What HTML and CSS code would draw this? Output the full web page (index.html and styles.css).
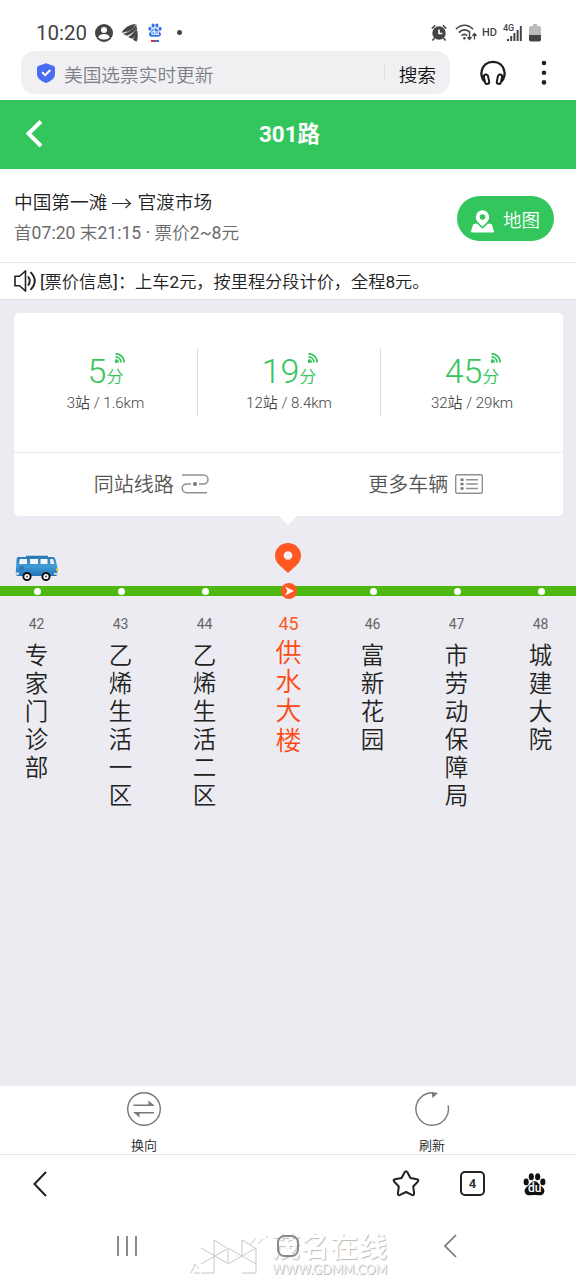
FILE: index.html
```html
<!DOCTYPE html>
<html lang="zh-CN">
<head>
<meta charset="utf-8">
<title>301路</title>
<link rel="stylesheet" href="styles.css">
</head>
<body>
<svg class="defs" width="0" height="0">
  <defs>
    <symbol id="signal" viewBox="0 0 10 10"><path d="M.5.8A8.500 8.500 0 0 1 9.200 9.500M.5 3.900A5.500 5.500 0 0 1 6.100 9.500M.5 6.800A2.600 2.600 0 0 1 3.200 9.500" fill="none" stroke="currentColor" stroke-width="1.700"/><path d="M0 7h1.500l1 3H0z" fill="currentColor"/></symbol>
    <symbol id="paw" viewBox="0 0 24 24"><ellipse cx="3.3" cy="9.8" rx="2.7" ry="3.5"/><ellipse cx="8.7" cy="4.4" rx="2.7" ry="3.7"/><ellipse cx="15.3" cy="4.4" rx="2.7" ry="3.7"/><ellipse cx="20.7" cy="9.8" rx="2.7" ry="3.5"/><path d="M12 9c3 0 3.800 2.200 6 4.300 2.600 2.300 5 4 4.200 7-.8 3.200-3.700 3.700-6.500 3.400-2.500-.3-4.900-.3-7.400 0-2.800.3-5.700-.2-6.500-3.400-.8-3 1.600-4.700 4.200-7C8.200 11.200 9 9 12 9z"/></symbol>
  </defs>
</svg>

<div class="status">
  <span class="time">10:20</span>
  <svg class="s-user" width="18" height="18" viewBox="0 0 18 18"><circle cx="9" cy="9" r="9" fill="#444"/><circle cx="9" cy="6" r="3" fill="#fff"/><path d="M3.200 13.500C4 10.800 6.500 10.100 9 10.100s5 .7 5.800 3.400C13 15 11.500 15.500 9 15.500s-4-.5-5.800-2z" fill="#fff"/></svg>
  <svg class="s-wing" width="16" height="18" viewBox="0 0 16 18"><path d="M0 8.500C3 3 8 1 13.500 0 12 4 9 6.500 5 7.500zM1.500 10C7 8 11 6 14.300.8 14.500 7 10 9.500 5 11.500zM6.500 13C10 11 13 8 14.600 3c.8 6-.5 9-4.500 11.500zM11 15.500C13.500 12 14.500 10 15 7c1 4 .7 7-.5 10.500z" fill="#444" stroke="#444" stroke-width=".4"/></svg>
  <span class="s-paw"><svg width="14" height="14" fill="#3473e8"><use href="#paw"/></svg><b>du</b><i></i></span>
  <span class="s-dot"></span>
  <span class="grow"></span>
  <svg width="16" height="17" viewBox="0 0 16 17"><circle cx="8" cy="9" r="6.700" fill="#444"/><path d="M8 5.500V9.500h3.400" stroke="#fff" stroke-width="1.600" fill="none"/><path d="M.8 4.500 4.200 1.200M15.200 4.500 11.800 1.200M3.500 14l-2 2.500M12.500 14l2 2.500" stroke="#444" stroke-width="1.600"/></svg>
  <svg class="s-wifi" width="22" height="17" viewBox="0 0 22 17"><path d="M1 5.200C6-.1 13-.1 18 5.200M3.800 8.600c3.500-3.600 8-3.600 11.400 0M6.600 11.600c1.900-1.700 3.700-1.700 5.600 0" fill="none" stroke="#444" stroke-width="1.700"/><circle cx="9.400" cy="14.300" r="1.200" fill="#444"/><path d="M14.500 9v6M12.500 13l2 2.500 2-2.500M19.500 15.500v-6M17.500 12l2-2.500 2 2.500" fill="none" stroke="#444" stroke-width="1.300"/></svg>
  <span class="s-hd">HD</span>
  <span class="s-net">4G<svg width="15" height="15" viewBox="0 0 15 15" fill="#444"><path d="M0 13h2v2H0zM3.200 10h2v5h-2zM6.400 7h2v8h-2zM9.600 4h2v11h-2zM12.800 0h2v15h-2z"/></svg></span>
  <svg class="s-bat" width="12" height="18" viewBox="0 0 12 18"><path d="M4 0h4v2h2q2 0 2 2v8H0V4q0-2 2-2h2z" fill="#bbb"/><path d="M0 11h12v4.500Q12 17.500 10 17.500H2Q0 17.500 0 15.500z" fill="#444"/></svg>
</div>

<div class="search">
  <div class="pill">
    <svg width="18" height="20" viewBox="0 0 18 20"><path d="M9 .3 16.800 3q1.200.5 1.200 1.700V11c0 4.500-4 7-9 9-5-2-9-4.500-9-9V4.700Q0 3.500 1.200 3z" fill="#4a6cf0"/><path d="m5.200 9.300 3 2.900 5.100-5.200" fill="none" stroke="#fff" stroke-width="1.900"/></svg>
    <span class="query">美国选票实时更新</span>
    <span class="rule"></span>
    <span class="go">搜索</span>
  </div>
  <svg class="phones" width="26" height="26" viewBox="0 0 26 26"><path d="M4.600 21.500C1.300 18.500 1.200 13 1.600 11.500 2.600 5.500 7 1.800 13 1.800s10.400 3.700 11.400 9.700c.4 1.500.3 7-3 10" fill="none" stroke="#1c1c1c" stroke-width="2.300"/><rect x="4.400" y="14.500" width="4.200" height="9.500" rx="2.100" transform="rotate(-12 6.500 19)" fill="#fff" stroke="#1c1c1c" stroke-width="2"/><rect x="17.400" y="14.500" width="4.200" height="9.500" rx="2.100" transform="rotate(12 19.500 19)" fill="#fff" stroke="#1c1c1c" stroke-width="2"/></svg>
  <svg width="6" height="26" viewBox="0 0 6 26" fill="#222"><circle cx="3" cy="3" r="2.300"/><circle cx="3" cy="12.800" r="2.300"/><circle cx="3" cy="22.400" r="2.300"/></svg>
</div>

<header class="titlebar">
  <svg width="18" height="28" viewBox="0 0 18 28"><path d="M16 1.500 3.500 13.500 16 26" fill="none" stroke="#fff" stroke-width="4"/></svg>
  <h1>301路</h1>
</header>

<section class="info">
  <div>
    <div class="route">中国第一滩<svg width="20" height="12" viewBox="0 0 20 12"><path d="M0 6.500h18.500M13.500 2l5 4.500-5 4.500" fill="none" stroke="#333" stroke-width="1.200"/></svg>官渡市场</div>
    <div class="hours">首<em>07:20 </em>末<em>21:15 · </em>票价<em>2~8</em>元</div>
  </div>
  <a class="map"><svg width="23" height="23" viewBox="0 0 23 23"><path fill-rule="evenodd" d="M11.500.3a6.700 6.700 0 0 1 6.700 6.700c0 4.200-3.700 6.500-6.700 9.800C8.500 13.500 4.800 11.200 4.800 7A6.700 6.700 0 0 1 11.500.3zm0 3.900a2.800 2.800 0 1 0 0 5.600 2.800 2.800 0 0 0 0-5.600z" fill="#fff"/><path d="M3.500 13.700h2.700l5.300 5 5.300-5h2.700q1 0 1.400 1l2 6q.5 1.800-1.300 1.800H1.400q-1.800 0-1.300-1.800l2-6q.4-1 1.400-1z" fill="#fff"/></svg>地图</a>
</section>

<section class="notice">
  <svg width="23" height="22" viewBox="0 0 23 22"><path d="M1 6.300h4.500L11.500 1v20l-6-5.300H1z" fill="none" stroke="#222" stroke-width="1.600"/><path d="M14 6.500q3.500 4.500 0 9M16.500 2.200q8.500 8.800 0 17.600" fill="none" stroke="#222" stroke-width="1.900"/></svg>
  <span><em>[</em>票价信息<em>]</em>：上车<em>2</em>元，按里程分段计价，全程<em>8</em>元。</span>
</section>

<main>
  <section class="card">
    <div class="arrivals">
      <div class="bus"><div class="eta">5<span>分<svg><use href="#signal"/></svg></span></div><div class="dist">3站 / 1.6km</div></div>
      <div class="bus"><div class="eta">19<span>分<svg><use href="#signal"/></svg></span></div><div class="dist">12站 / 8.4km</div></div>
      <div class="bus"><div class="eta">45<span>分<svg><use href="#signal"/></svg></span></div><div class="dist">32站 / 29km</div></div>
    </div>
    <div class="links">
      <a>同站线路<svg width="28" height="20" viewBox="0 0 28 20"><path d="M1 1h21.500a4.500 4.500 0 0 1 0 9H18M10 10H5.500a4.300 4.300 0 0 0 0 8.700H26" fill="none" stroke="#909094" stroke-width="1.500"/><circle cx="14" cy="10" r="2" fill="#77777b"/></svg></a>
      <a>更多车辆<svg width="28" height="20" viewBox="0 0 28 20"><rect x=".7" y=".7" width="26.600" height="18.600" rx="1.500" fill="none" stroke="#909094" stroke-width="1.400"/><path d="M11 5.700h12M11 10h12M11 14.500h12" stroke="#909094" stroke-width="1.500"/><path d="M5.500 5.700h3M5.500 10h3M5.500 14.500h3" stroke="#77777b" stroke-width="2.400"/></svg></a>
    </div>
  </section>

  <section class="line">
    <div class="markers">
      <svg width="43" height="27" viewBox="0 0 43 27"><defs><linearGradient id="body" x1="0" y1="0" x2="0" y2="1"><stop offset="0" stop-color="#2775b5"/><stop offset=".5" stop-color="#429bd8"/><stop offset="1" stop-color="#2274b4"/></linearGradient></defs><path d="M3 2h8V.8h22V2h5q2 0 2.600 3l1.700 7v7.500l-1 1.500H2L.7 19 1.500 5Q1.700 2 3 2z" fill="url(#body)"/><path d="M4.800 4H12v5H4.100zM15 4h8v5h-8zM25.500 4h7v5h-7zM35 4h3l1.500 5h-4z" fill="#f2f4f6"/><path d="M4.500 12h4.500M4.500 14h4.500" stroke="#205f95"/><path d="M0 17.500h4v2.200H0zM39 18h4v1.700h-4z" fill="#d8e1eb"/><path d="M41 13h1.800v3H41z" fill="#f2b51d"/><g fill="#fff" stroke="#111" stroke-width="2"><circle cx="12" cy="21.500" r="3.600"/><circle cx="31" cy="21.500" r="3.600"/></g><g fill="#444"><circle cx="12" cy="21.500" r="1"/><circle cx="31" cy="21.500" r="1"/></g></svg>
      <svg width="26" height="30" viewBox="0 0 26 30"><path d="M13 0a13 12.700 0 0 1 13 12.700C26 17 23.500 20.500 21 22.700L13 30l-8-7.300C2.500 20.500 0 17 0 12.700A13 12.700 0 0 1 13 0z" fill="#ff5722"/><circle cx="13" cy="12.500" r="4.300" fill="#f6f2f4"/></svg>
    </div>
    <div class="track">
      <i></i><i></i><i></i>
      <svg width="16" height="16" viewBox="0 0 16 16"><circle cx="8" cy="8" r="8" fill="#ff5722"/><path d="M4 3.500 13 8l-9 4.500L6.500 8z" fill="#fff"/></svg>
      <i></i><i></i><i></i>
    </div>
    <div class="stops">
      <div class="stop"><span>42</span><p>专家门诊部</p></div>
      <div class="stop"><span>43</span><p>乙烯生活一区</p></div>
      <div class="stop"><span>44</span><p>乙烯生活二区</p></div>
      <div class="stop current"><span>45</span><p>供水大楼</p></div>
      <div class="stop"><span>46</span><p>富新花园</p></div>
      <div class="stop"><span>47</span><p>市劳动保障局</p></div>
      <div class="stop"><span>48</span><p>城建大院</p></div>
    </div>
  </section>
</main>

<section class="actions">
  <a><svg width="36" height="36" viewBox="0 0 36 36"><circle cx="18" cy="18" r="16.300" fill="none" stroke="#777" stroke-width="1.400"/><path d="M7.500 14.300h20M28 21.700H8" stroke="#777" stroke-width="1.500"/><path d="M22.500 9.500 28.500 15h-6zM13.500 26.500 7.500 21h6z" fill="#777"/></svg>换向</a>
  <a><svg width="36" height="36" viewBox="0 0 36 36"><path d="M34.100 14.500A16.300 16.300 0 1 1 19 1.700" fill="none" stroke="#777" stroke-width="1.400"/><path d="M17.500 1 24 2l-5.500 5z" fill="#777"/></svg>刷新</a>
</section>

<nav class="browser">
  <svg width="16" height="28" viewBox="0 0 16 28"><path d="M14 2 2.500 14 14 26" fill="none" stroke="#222" stroke-width="2"/></svg>
  <span class="grow"></span>
  <svg class="star" width="28" height="27" viewBox="0 0 28 27"><path d="M12.600 2.300q1.400-2.300 2.800 0l3 5.700 6.500 1.200q2.500.6.800 2.500L21.200 16.500l.9 6.800q.1 2.500-2.200 1.600L14 22l-5.900 2.900q-2.300.9-2.200-1.600l.9-6.800L2.300 11.700Q.6 9.800 3.100 9.200L9.600 8z" fill="none" stroke="#222" stroke-width="2" stroke-linejoin="round"/></svg>
  <span class="tabs">4</span>
  <span class="paw"><svg width="23" height="24" fill="#111"><use href="#paw"/></svg><b>du</b></span>
</nav>

<nav class="system">
  <svg width="22" height="22" viewBox="0 0 22 22"><path d="M2 1v20M11 1v20M20 1v20" stroke="#777" stroke-width="1.700"/></svg>
  <svg class="home" width="24" height="24" viewBox="0 0 24 24"><rect x="2" y="2" width="20" height="20" rx="6.500" fill="none" stroke="#888" stroke-width="2"/></svg>
  <svg width="14" height="24" viewBox="0 0 14 24"><path d="M13 1 2 12l11 11" fill="none" stroke="#777" stroke-width="1.700"/></svg>
  <div class="watermark">
    <svg width="78" height="42" viewBox="0 0 78 42" fill="none" stroke="#c8c8c8" stroke-width="1"><path d="M1 37l4-9 4 5M4 37h6M24 4v33H11M24 4l13 8M11 12l26 15M11 28l26-15M38 12v16l28-16M38 12l28 16M52 4v16M52 4l13 8M66 12v25H52M60 9l6-7M68 8l5-5M76 1h2"/></svg>
    <div><strong>茂名在线</strong><span>WWW.GDMM.COM</span></div>
  </div>
</nav>
</body>
</html>
```
FILE: styles.css
```css
* { box-sizing: border-box; margin: 0; padding: 0; }
body {
  width: 576px; height: 1280px; overflow: hidden;
  display: flex; flex-direction: column;
  background: #fff; color: #333;
  font-family: Roboto, "Noto Sans CJK SC", sans-serif;
  font-weight: 350;
}
em { font-style: normal; font-weight: 400; }
svg { display: block; flex: none; }
.defs { position: absolute; }
.grow { flex: 1; }

.status { height: 51px; padding: 14px 35px 0 36px; display: flex; align-items: center; flex: none; color: #444; }
.time { font-size: 20.500px; font-weight: 400; width: 59px; line-height: 24px; }
.s-wing { margin-left: 9px; }
.s-paw { position: relative; width: 14px; height: 19px; margin-left: 10px; }
.s-paw b { position: absolute; left: 3px; top: 6px; color: #fff; font-size: 7px; line-height: 8px; }
.s-paw i { display: block; width: 8px; height: 1.500px; margin: 3px 0 0 3px; background: linear-gradient(90deg, #d33 50%, #3473e8 50%); }
.s-dot { width: 5px; height: 5px; border-radius: 50%; background: #444; margin-left: 15px; }
.s-wifi { margin-left: 8px; }
.s-hd { font-size: 11px; font-weight: 500; margin-left: 5px; width: 15px; }
.s-net { position: relative; width: 20px; height: 18px; margin-left: 6px; font-size: 9px; line-height: 9px; font-weight: 500; }
.s-net svg { position: absolute; left: 4px; top: 2px; }
.s-bat { margin-left: 6px; }

.search { height: 49px; flex: none; display: flex; align-items: flex-start; padding-left: 21px; }
.pill { width: 429px; height: 43px; border-radius: 14px; background: #f0f0f3; display: flex; align-items: center; padding: 1px 14px 0 16px; font-size: 18.700px; }
.pill svg { margin-top: -1px; }
.query { margin-left: 9px; flex: 1; color: #7c7f88; }
.rule { width: 1px; height: 17px; background: #dedee2; margin-top: -3px; }
.go { color: #111; padding-left: 14px; }
.phones { margin: 9px 35px 0 30px; }
.search > svg:last-child { margin-top: 9px; }
.titlebar { height: 69px; flex: none; background: #33c65c; display: grid; grid-template-columns: 60px 1fr 60px; align-items: center; padding: 0 0 2px; }
.titlebar svg { margin-left: 25px; }
h1 { color: #fff; font-size: 22.500px; line-height: 28px; font-weight: 700; text-align: center; padding-left: 3px; }

.info { height: 93px; flex: none; display: flex; justify-content: space-between; padding: 19px 22px 0 14px; }
.route { display: flex; align-items: center; gap: 5px; font-size: 18.700px; line-height: 30px; color: #222; }
.hours { font-size: 17.600px; line-height: 30px; color: #6b6b6b; }
.map { width: 97px; height: 45px; margin-top: 8px; border-radius: 23px; background: #33c65c; color: #fff; display: flex; align-items: center; gap: 9px; padding: 0 0 0 14px; font-size: 18.500px; }
.map svg { margin-top: 6px; }
.notice { height: 37px; flex: none; border-top: 1px solid #e5e5e5; display: flex; align-items: center; gap: 3px; padding: 0 0 1px 14px; font-size: 17.200px; color: #222; }

main { height: 787px; flex: none; background: #ebebf1; border-top: 1px solid #e2e2e5; padding-top: 13px; }
.card { width: 549px; height: 203px; margin-left: 14px; background: #fff; border-radius: 5px; position: relative; }
.card::after { content: ""; position: absolute; left: 265px; top: 203px; border: 9px solid transparent; border-top-color: #fff; border-bottom: 0; }
.arrivals { height: 140px; display: grid; grid-template-columns: repeat(3, 1fr); border-bottom: 1px solid #e8e8ea; padding: 36px 0; }
.bus { text-align: center; border-left: 1px solid #dcdcdf; height: 67px; }
.bus:first-child { border: 0; }
.eta { color: #33c65c; font-size: 34px; line-height: 44px; height: 44px; }
.eta span { display: inline-block; position: relative; font-size: 17px; line-height: 20px; }
.eta svg { position: absolute; left: 9px; top: -14px; width: 10px; height: 10px; }
.dist { font-size: 15px; line-height: 20px; color: #444; }
.links { height: 63px; display: grid; grid-template-columns: 1fr 1fr; }
.links a { display: flex; align-items: center; justify-content: center; gap: 7px; font-size: 20px; color: #555; padding-bottom: 2px; }

.markers { height: 70px; display: flex; align-items: flex-start; padding: 27px 0 0 15px; }
.markers svg:first-child { margin: 12px 217px 0 0; }
.track { height: 10px; background: #4db910; display: grid; grid-template-columns: repeat(7, 84px); justify-content: center; align-items: center; justify-items: center; padding-left: 2px; }
.track i { width: 7px; height: 7px; border-radius: 50%; background: #fff; }
.track svg { margin: -3px 1px -3px 0; }
.stops { display: grid; grid-template-columns: repeat(7, 84px); justify-content: center; padding: 18px 0 0 1px; }
.stop { display: flex; flex-direction: column; align-items: center; }
.stop span { font-size: 14px; line-height: 20px; color: #666; font-weight: 400; }
.stop p { width: 1em; font-size: 23.500px; line-height: 28.100px; margin-top: 8px; word-break: break-all; color: #222; }
.current span { font-size: 18px; color: #ff5722; }
.current p { font-size: 26px; line-height: 29.200px; margin-top: 5px; color: #ff4a12; }

.actions { height: 69px; flex: none; border-bottom: 1px solid #e5e5e5; display: grid; grid-template-columns: 1fr 1fr; }
.actions a { display: flex; flex-direction: column; align-items: center; padding: 5px 0 0; font-size: 13px; line-height: 20px; gap: 9px; color: #222; }
.browser { height: 56px; flex: none; display: flex; align-items: center; padding: 1px 30px 0 32px; }
.tabs { width: 25px; height: 25px; margin: 0 38px 0 40px; border: 2px solid #222; border-radius: 5px; font: 700 13px/21px Roboto, sans-serif; text-align: center; }
.paw { position: relative; }
.paw b { position: absolute; left: 5px; top: 10px; color: #fff; font-size: 12px; line-height: 12px; font-weight: 500; }
.system { height: 69px; flex: none; position: relative; display: flex; align-items: center; justify-content: space-between; padding: 0 119px 0 116px; }
.home { position: relative; z-index: 1; margin-right: 6px; }
.watermark { position: absolute; left: 190px; top: 25px; display: flex; gap: 4px; color: #fff; text-shadow: 1px 1px 1px #bbb; }
.watermark strong { display: block; font-size: 28px; line-height: 24px; letter-spacing: 1px; font-weight: 700; height: 27px; }
.watermark span { display: block; font: 400 12.500px/12px Lato, sans-serif; color: #f4f4f4; text-shadow: 1px 1px 0 #bbb; white-space: nowrap; margin-top: 1px; }
```
